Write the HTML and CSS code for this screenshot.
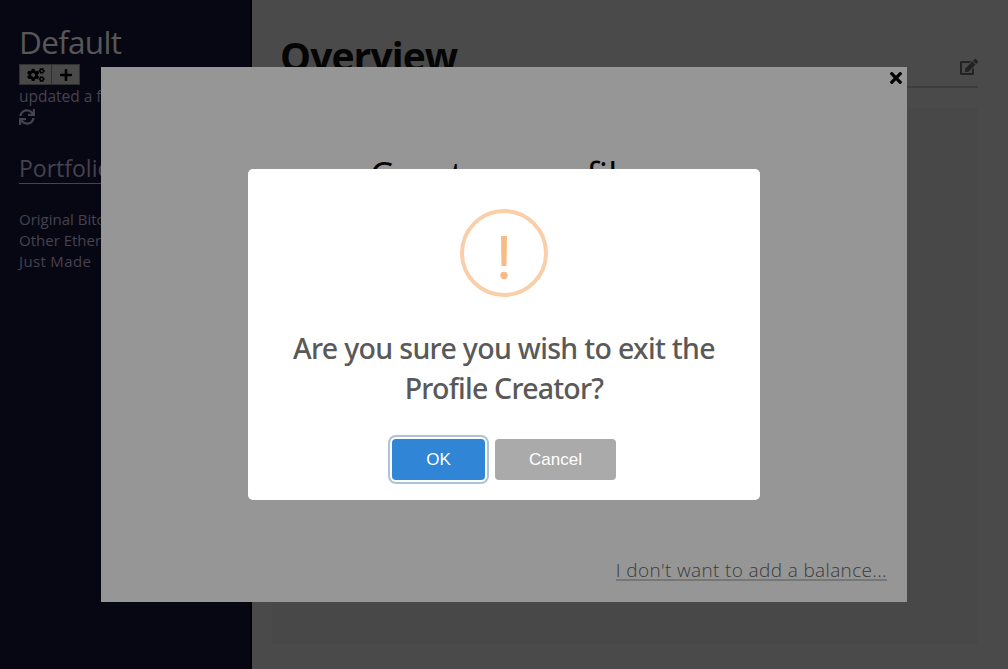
FILE: index.html
```
<!DOCTYPE html>
<html lang="en">
<head>
<meta charset="utf-8">
<title>Overview</title>
<link rel="stylesheet" href="styles.css">
</head>
<body>
<div class="app">
  <aside class="sidebar">
    <h2 class="profile"><span>Default</span></h2>
    <div class="tools">
      <button class="tool tool-cogs"><svg viewBox="0 0 640 512" width="18" height="14"><defs><path id="cog" d="M512.1 191l-8.2 14.3c-3 5.3-9.4 7.5-15.1 5.4-11.8-4.4-22.6-10.7-32.1-18.6-4.6-3.8-5.8-10.5-2.8-15.7l8.2-14.3c-6.9-8-12.3-17.3-15.9-27.4h-16.5c-6 0-11.2-4.3-12.2-10.3-2-12-2.1-24.6 0-37.1 1-6 6.2-10.4 12.2-10.4h16.5c3.6-10.1 9-19.4 15.9-27.4l-8.2-14.3c-3-5.2-1.9-11.9 2.8-15.7 9.5-7.9 20.4-14.2 32.1-18.6 5.7-2.1 12.1.1 15.1 5.4l8.2 14.3c10.5-1.9 21.2-1.9 31.7 0L552 6.3c3-5.3 9.4-7.5 15.1-5.4 11.8 4.4 22.6 10.7 32.1 18.6 4.6 3.8 5.8 10.5 2.8 15.7l-8.2 14.3c6.9 8 12.3 17.3 15.9 27.4h16.5c6 0 11.2 4.3 12.2 10.3 2 12 2.1 24.6 0 37.1-1 6-6.2 10.4-12.2 10.4h-16.5c-3.6 10.1-9 19.4-15.9 27.4l8.2 14.3c3 5.2 1.9 11.9-2.8 15.7-9.5 7.9-20.4 14.2-32.1 18.6-5.7 2.1-12.1-.1-15.1-5.4l-8.2-14.3c-10.4 1.9-21.2 1.9-31.7 0zm-10.5-58.8c38.5 29.6 82.4-14.3 52.8-52.8-38.5-29.7-82.4 14.3-52.8 52.8z"/></defs><use href="#cog"/><use href="#cog" y="299"/><path d="M386.3 286.1l33.7 16.8c10.1 5.8 14.5 18.1 10.5 29.1-8.9 24.2-26.4 46.4-42.6 65.8-7.4 8.9-20.2 11.1-30.3 5.3l-29.1-16.8c-16 13.7-34.6 24.6-54.9 31.7v33.6c0 11.6-8.3 21.6-19.7 23.6-24.6 4.2-50.4 4.4-75.9 0-11.5-2-20-11.9-20-23.6V418c-20.3-7.2-38.9-18-54.9-31.7L74 403c-10 5.8-22.9 3.6-30.3-5.3-16.2-19.4-33.3-41.6-42.2-65.7-4-10.9.4-23.2 10.5-29.1l33.3-16.8c-3.9-20.9-3.9-42.4 0-63.4L12 205.8c-10.1-5.8-14.6-18.1-10.5-29 8.9-24.2 26-46.4 42.2-65.8 7.4-8.9 20.2-11.1 30.3-5.3l29.1 16.8c16-13.7 34.6-24.6 54.9-31.7V57.1c0-11.5 8.2-21.5 19.6-23.5 24.6-4.2 50.5-4.4 76-.1 11.5 2 20 11.9 20 23.6v33.6c20.3 7.2 38.9 18 54.9 31.7l29.1-16.8c10-5.8 22.9-3.6 30.3 5.3 16.2 19.4 33.2 41.6 42.1 65.8 4 10.9.1 23.2-10 29.1l-33.7 16.8c3.9 21 3.9 42.5 0 63.5zm-117.6 21.1c59.2-77-28.7-164.9-105.7-105.7-59.2 77 28.7 164.9 105.7 105.7z"/></svg></button>
      <button class="tool tool-plus"><svg viewBox="0 0 448 512" width="12" height="14"><path d="M416 208H272V64c0-17.67-14.33-32-32-32h-32c-17.67 0-32 14.33-32 32v144H32c-17.67 0-32 14.33-32 32v32c0 17.67 14.33 32 32 32h144v144c0 17.67 14.33 32 32 32h32c17.67 0 32-14.33 32-32V304h144c17.67 0 32-14.33 32-32v-32c0-17.67-14.33-32-32-32z"/></svg></button>
    </div>
    <p class="updated"><span>updated a few seconds ago</span></p>
    <svg class="sync" viewBox="0 0 512 512" width="16" height="16"><path d="M440.65 12.57l4 82.77A247.16 247.16 0 0 0 255.83 8C134.73 8 33.91 94.92 12.29 209.82A12 12 0 0 0 24.09 224h49.05a12 12 0 0 0 11.67-9.26 175.91 175.91 0 0 1 317-56.94l-101.46-4.86a12 12 0 0 0-12.57 12v47.41a12 12 0 0 0 12 12H500a12 12 0 0 0 12-12V12a12 12 0 0 0-12-12h-47.37a12 12 0 0 0-11.98 12.57zM255.83 432a175.61 175.61 0 0 1-146-77.8l101.8 4.87a12 12 0 0 0 12.57-12v-47.4a12 12 0 0 0-12-12H12a12 12 0 0 0-12 12V500a12 12 0 0 0 12 12h47.35a12 12 0 0 0 12-12.6l-4.15-82.57A247.17 247.17 0 0 0 255.83 504c121.11 0 221.93-86.92 243.55-201.82a12 12 0 0 0-11.8-14.18h-49.05a12 12 0 0 0-11.67 9.26A175.86 175.86 0 0 1 255.83 432z"/></svg>
    <h3 class="portfolios">Portfolios</h3>
    <ul class="list"><li>Original Bitcoin</li><li>Other Ethereum</li><li>Just Made</li></ul>
  </aside>
  <main class="main">
    <header class="head">
      <h1 class="title">Overview</h1>
      <svg class="edit" viewBox="0 0 576 512" width="18" height="16"><path d="M402.6 83.2l90.2 90.2c3.8 3.8 3.8 10 0 13.8L274.4 405.6l-92.8 10.3c-12.4 1.4-22.9-9.1-21.5-21.5l10.3-92.8L388.8 83.2c3.8-3.8 10-3.8 13.8 0zm162-22.9l-48.8-48.8c-15.2-15.2-39.9-15.2-55.2 0l-35.4 35.4c-3.8 3.8-3.8 10 0 13.8l90.2 90.2c3.8 3.8 10 3.8 13.8 0l35.4-35.4c15.2-15.3 15.2-40 0-55.2zM384 346.2V448H64V128h229.8c3.2 0 6.2-1.3 8.5-3.5l40-40c7.6-7.6 2.2-20.5-8.5-20.5H48C21.5 64 0 85.5 0 112v352c0 26.5 21.5 48 48 48h352c26.5 0 48-21.5 48-48V306.2c0-10.7-12.9-16-20.5-8.5l-40 40c-2.2 2.3-3.5 5.3-3.5 8.5z"/></svg>
    </header>
    <section class="panel"></section>
  </main>
</div>
<div class="layer">
  <div class="creator">
    <svg class="close" viewBox="0 0 352 512" width="12" height="18"><path d="M242.72 256l100.07-100.07c12.28-12.28 12.28-32.19 0-44.48l-22.24-22.24c-12.28-12.28-32.19-12.28-44.48 0L176 189.28 75.93 89.21c-12.28-12.28-32.19-12.28-44.48 0L9.21 111.45c-12.28 12.28-12.28 32.19 0 44.48L109.28 256 9.21 356.07c-12.28 12.28-12.28 32.19 0 44.48l22.24 22.24c12.28 12.28 32.2 12.28 44.48 0L176 322.72l100.07 100.07c12.28 12.28 32.2 12.28 44.48 0l22.24-22.24c12.28-12.28 12.28-32.19 0-44.48L242.72 256z"/></svg>
    <h2 class="creator-title"><span>Create a profile</span></h2>
    <a class="skip">I don't want to add a balance...</a>
  </div>
</div>
<div class="layer">
  <div class="alert" role="dialog">
    <svg class="warning" viewBox="0 0 88 88" width="88" height="88"><circle cx="44" cy="44" r="42"/><path d="M41 27h6l-.5 30h-5z"/><circle class="dot" cx="44" cy="66.500" r="3.700"/></svg>
    <h2 class="question"><span class="q1">Are you sure you wish to exit the</span><br><span class="q2">Profile Creator?</span></h2>
    <div class="actions"><button class="btn ok">OK</button><button class="btn cancel">Cancel</button></div>
  </div>
</div>
</body>
</html>
```
FILE: styles.css
```
* { box-sizing: border-box; margin: 0; padding: 0; }
body { width: 1008px; height: 669px; overflow: hidden; font-family: "Open Sans", "Noto Sans", sans-serif; background: #4a4a4a; }
svg { display: block; flex: none; }
.app { display: flex; height: 669px; }
.sidebar { width: 252px; flex: none; padding: 22px 19px 0; background: #070713; border-right: 2px solid #000; color: #46424f; white-space: nowrap; overflow: hidden; }
.profile { height: 42px; font-size: 31.5px; line-height: 40px; font-weight: 400; color: #575757; letter-spacing: -.7px; }
.tools { display: flex; width: 61px; height: 21px; border: 1px solid #303030; background: #494949; }
.tool { display: flex; align-items: center; justify-content: center; border: 0; background: none; }
.tool-cogs { width: 32px; border-right: 1px solid #303030; }
.tool-plus { width: 27px; }
.updated { height: 24px; font-size: 15.5px; line-height: 22px; }
.updated span { letter-spacing: -.02px; }
.sync { fill: #46424f; }
.portfolios { margin-top: 28px; height: 31px; border-bottom: 1px solid #46424f; font-size: 23px; line-height: 31px; font-weight: 400; }
.list { list-style: none; margin-top: 25px; font-size: 15px; line-height: 21px; }
.list li:last-child { letter-spacing: .35px; }
.main { flex: 1; padding: 31px 30px 0 20px; }
.head { display: flex; justify-content: space-between; height: 57px; margin-left: 8px; border-bottom: 2px solid #3d3d3d; }
.title { font-size: 39px; line-height: 50px; font-weight: 700; color: #050505; letter-spacing: -.9px; }
.edit { margin-top: 28px; fill: #222; }
.panel { height: 536px; margin-top: 20px; background: #484848; }
.layer { position: absolute; inset: 0; display: flex; justify-content: center; align-items: center; }
.creator { width: 806px; height: 535px; padding: 2px 5px 18px; background: #969696; display: flex; flex-direction: column; }
.close { align-self: flex-end; }
.creator-title { margin-top: 62px; text-align: center; font-size: 37.5px; line-height: 54px; font-weight: 400; color: #050505; }
.skip { margin: auto 15px 3px auto; border-bottom: 2px solid #777; font-size: 19px; line-height: 18px; font-weight: 300; color: #3a3a3a; white-space: nowrap; letter-spacing: .36px; }
.alert { width: 512px; height: 331px; padding-top: 40px; background: #fff; border-radius: 5px; display: flex; flex-direction: column; align-items: center; }
.warning { fill: #f8bb86; }
.warning circle:first-child { fill: none; stroke: #facea8; stroke-width: 4; }
.question { margin-top: 31px; font-family: "Noto Sans", sans-serif; font-size: 28.5px; line-height: 40px; font-weight: 500; color: #595959; text-align: center; white-space: nowrap; letter-spacing: -.68px; }
.q2 { letter-spacing: -.78px; }
.actions { display: flex; gap: 10px; margin-top: 31px; }
.btn { height: 41px; border: 0; border-radius: 4px; color: #fff; font: 17px "Liberation Sans", sans-serif; }
.ok { width: 93px; background: #3085d6; box-shadow: 0 0 0 2px #fff, 0 0 0 4px #acc3d9; }
.cancel { width: 121px; background: #aaa; }
```
